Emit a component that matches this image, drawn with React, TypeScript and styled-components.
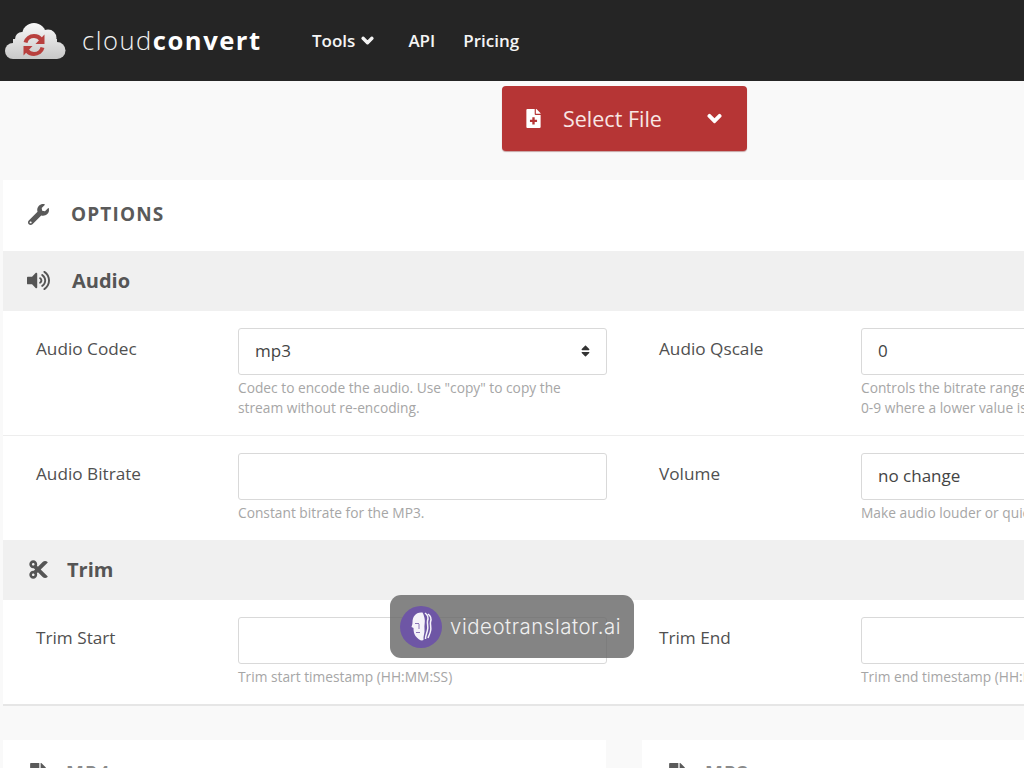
import React from "react";
import styled, { createGlobalStyle } from "styled-components";
import { FaChevronDown, FaCut, FaFile, FaFileMedical, FaSort, FaVolumeUp, FaWrench } from "react-icons/fa";

const Global = createGlobalStyle`
  html, body { margin: 0; padding: 0; width: 1024px; height: 768px; overflow: hidden; background: #f9f9f9; }
  body { font-family: "Open Sans", "Liberation Sans", sans-serif; color: #4a4a4a; }
  * { box-sizing: border-box; }
`;

const Page = styled.div`
  width: 1024px;
  height: 768px;
  overflow: hidden;
  position: relative;
  background: #f9f9f9;
`;

const Header = styled.header`
  height: 81px;
  background: #252525;
  display: flex;
  align-items: center;
  padding-left: 5px;
`;

const Wordmark = styled.div`
  margin-left: 16px;
  width: 230px;
  font-size: 25.6px;
  line-height: 1;
  letter-spacing: 1.5px;
  font-weight: 300;
  color: #f2f2f2;
  white-space: nowrap;
  b { font-weight: 700; color: #fff; }
`;

const Nav = styled.nav`
  display: flex;
  align-items: center;
  gap: 28px;
  font-size: 17px;
  font-weight: 600;
  color: #f5f5f5;
`;

const NavItem = styled.span<{ $menu?: boolean }>`
  display: inline-flex;
  align-items: center;
  gap: 6px;
  ${p => (p.$menu ? "margin-right: 6px;" : "")}
  svg { width: 13px; height: 13px; stroke: currentColor; stroke-width: 50px; }
`;

const UploadBar = styled.div`
  width: 1249px;
  height: 99px;
  padding-top: 5px;
  display: flex;
  justify-content: center;
`;

const SelectButton = styled.div`
  width: 245px;
  height: 65px;
  background: #b63535;
  border-radius: 4px;
  color: #f8e6e4;
  display: flex;
  align-items: center;
  padding: 0 25px 0 22px;
  font-size: 21.5px;
  box-shadow: 0 1px 1px rgba(120, 30, 30, .4);
  span { flex: 1; margin-left: 20px; }
  svg { flex: none; color: #fff; }
  svg:last-child { stroke: currentColor; stroke-width: 50px; }
`;

const Card = styled.section`
  margin-left: 3px;
  width: 1240px;
  background: #fff;
  border-bottom: 2px solid #e6e6e6;
`;

const CardHead = styled.div`
  height: 71px;
  display: flex;
  align-items: center;
  padding: 0 0 3px 25px;
  color: #5a5a5a;
  font-size: 19px;
  font-weight: 700;
  letter-spacing: 1.15px;
  svg { width: 21px; height: 21px; margin-right: 22px; }
`;

const SectionHead = styled.div<{ $gap: number }>`
  height: 60px;
  background: #f0f0f0;
  display: flex;
  align-items: center;
  padding: 0 0 2px 24px;
  color: #555;
  font-size: 20px;
  font-weight: 700;
  svg { width: 23px; height: 21px; margin-right: ${p => p.$gap}px; }
`;

const Row = styled.div<{ $height: number; $line?: boolean }>`
  height: ${p => p.$height}px;
  display: grid;
  grid-template-columns: 33px 202px 369px 52px 202px 369px;
  padding-top: 17px;
  ${p => (p.$line ? "border-bottom: 1px solid #ededed;" : "")}
`;

const Label = styled.div<{ $col: number }>`
  grid-column: ${p => p.$col};
  font-size: 17.2px;
  line-height: 24px;
  padding-top: 9px;
  color: #505050;
`;

const Field = styled.div<{ $col: number }>`
  grid-column: ${p => p.$col};
`;

const Control = styled.div`
  height: 47px;
  border: 1px solid #d9d9d9;
  border-radius: 3px;
  background: #fff;
  display: flex;
  align-items: center;
  justify-content: space-between;
  padding: 0 16px 2px;
  font-size: 17px;
  color: #444;
  svg { width: 11px; height: 14px; color: #333; margin-right: -1px; }
`;

const Hint = styled.div`
  font-size: 13.75px;
  line-height: 20px;
  margin-top: 3px;
  color: #a6a6a6;
`;

const LowerGrid = styled.div`
  margin: 34px 0 0 3px;
  display: grid;
  grid-template-columns: 603px 603px;
  gap: 36px;
`;

const LowerCard = styled.div`
  height: 80px;
  background: #fff;
  padding: 21px 0 0 25px;
  display: flex;
  align-items: flex-start;
  gap: 18px;
  color: #8a8a8a;
  font-size: 19px;
  font-weight: 700;
  letter-spacing: 1.15px;
  line-height: 25px;
  svg { width: 20px; height: 21px; margin-top: 2px; color: #5a5a5a; }
`;

const Badge = styled.div`
  position: absolute;
  left: 390px;
  top: 595px;
  width: 244px;
  height: 63px;
  border-radius: 11px;
  background: rgba(105, 105, 105, .82);
  display: flex;
  align-items: center;
  padding-left: 10px;
  gap: 8px;
  color: #f0f0f0;
  font-family: "Inter", "Open Sans", sans-serif;
  font-size: 20.4px;
  font-weight: 300;
  letter-spacing: .55px;
`;

const Avatar = styled.div`
  width: 42px;
  height: 42px;
  flex: none;
  border-radius: 50%;
  background: #6e56a5;
  display: flex;
  align-items: center;
  justify-content: center;
`;

const CloudLogo = () => (
  <svg width="61" height="38" viewBox="0 0 61 38" aria-hidden="true">
    <defs>
      <linearGradient id="cl" gradientUnits="userSpaceOnUse" x1="0" y1="1" x2="0" y2="37">
        <stop offset="0" stopColor="#f8f8f8" />
        <stop offset="1" stopColor="#c8c8c8" />
      </linearGradient>
    </defs>
    <g fill="url(#cl)">
      <circle cx="29" cy="13" r="12" />
      <circle cx="43" cy="16" r="8.500" />
      <circle cx="17" cy="17" r="7" />
      <circle cx="8" cy="29" r="8" />
      <circle cx="52" cy="28.500" r="8.500" />
      <rect x="8" y="17" width="44" height="20" />
    </g>
    <g fill="none" stroke="#b8403e" strokeWidth="4">
      <path d="M20.500 20.500C21.500 16.500 25 14 29 14C32 14 34.500 15.300 36 17.500" />
      <path d="M37.500 25.500C36.500 29.500 33 32 29 32C26 32 23.500 30.700 22 28.500" />
    </g>
    <g fill="#b8403e">
      <path d="M39.500 12.500V22H30.500Z" />
      <path d="M18.500 33.500V24H27.500Z" />
    </g>
  </svg>
);

const FaceMark = () => (
  <svg width="26" height="32" viewBox="0 0 26 32" aria-hidden="true">
    <path d="M13 1.500C7.500 1.500 4.500 6 4.500 11C4.500 13 4 14.500 3.500 16L5.500 17C5.500 20 6 23 7.500 25C9.500 27.500 12 29.500 14 29.500L15.500 29C15 25 17 22 16.500 18C16 14 17.500 11 16.500 7C16 5 15.500 3 14.500 1.500Z" fill="#f5f3f9" />
    <path d="M17 2C20 4 20.500 7 19.500 10C19 13 20.500 15 19.500 19C19 22 17.500 24 17.500 28M20 3C23 5 23.500 8 22.500 11C22 14 23.500 16 22.500 20C22 23 20.500 25 20 27" fill="none" stroke="#f5f3f9" strokeWidth="1.500" />
    <path d="M7 12.500H11M8 21.500H12M11 13V18" fill="none" stroke="#8a76b5" strokeWidth="1" />
  </svg>
);

export default function App() {
  return (
    <Page>
      <Global />
      <Header>
        <CloudLogo />
        <Wordmark>cloud<b>convert</b></Wordmark>
        <Nav>
          <NavItem $menu>Tools <FaChevronDown /></NavItem>
          <NavItem>API</NavItem>
          <NavItem>Pricing</NavItem>
        </Nav>
      </Header>
      <UploadBar>
        <SelectButton>
          <FaFileMedical size={19} />
          <span>Select File</span>
          <FaChevronDown size={15} />
        </SelectButton>
      </UploadBar>
      <Card>
        <CardHead><FaWrench />OPTIONS</CardHead>
        <SectionHead $gap={22}><FaVolumeUp />Audio</SectionHead>
        <Row $height={125} $line>
          <Label $col={2}>Audio Codec</Label>
          <Field $col={3}>
            <Control>mp3<FaSort /></Control>
            <Hint>Codec to encode the audio. Use "copy" to copy the<br />stream without re-encoding.</Hint>
          </Field>
          <Label $col={5}>Audio Qscale</Label>
          <Field $col={6}>
            <Control>0</Control>
            <Hint>Controls the bitrate range of the VBR encoder.<br />0-9 where a lower value is a higher quality.</Hint>
          </Field>
        </Row>
        <Row $height={104}>
          <Label $col={2}>Audio Bitrate</Label>
          <Field $col={3}>
            <Control />
            <Hint>Constant bitrate for the MP3.</Hint>
          </Field>
          <Label $col={5}>Volume</Label>
          <Field $col={6}>
            <Control>no change</Control>
            <Hint>Make audio louder or quieter.</Hint>
          </Field>
        </Row>
        <SectionHead $gap={17}><FaCut />Trim</SectionHead>
        <Row $height={104}>
          <Label $col={2}>Trim Start</Label>
          <Field $col={3}>
            <Control />
            <Hint>Trim start timestamp (HH:MM:SS)</Hint>
          </Field>
          <Label $col={5}>Trim End</Label>
          <Field $col={6}>
            <Control />
            <Hint>Trim end timestamp (HH:MM:SS)</Hint>
          </Field>
        </Row>
      </Card>
      <LowerGrid>
        <LowerCard><FaFile />MP4</LowerCard>
        <LowerCard><FaFile />MP3</LowerCard>
      </LowerGrid>
      <Badge>
        <Avatar><FaceMark /></Avatar>
        videotranslator.ai
      </Badge>
    </Page>
  );
}
